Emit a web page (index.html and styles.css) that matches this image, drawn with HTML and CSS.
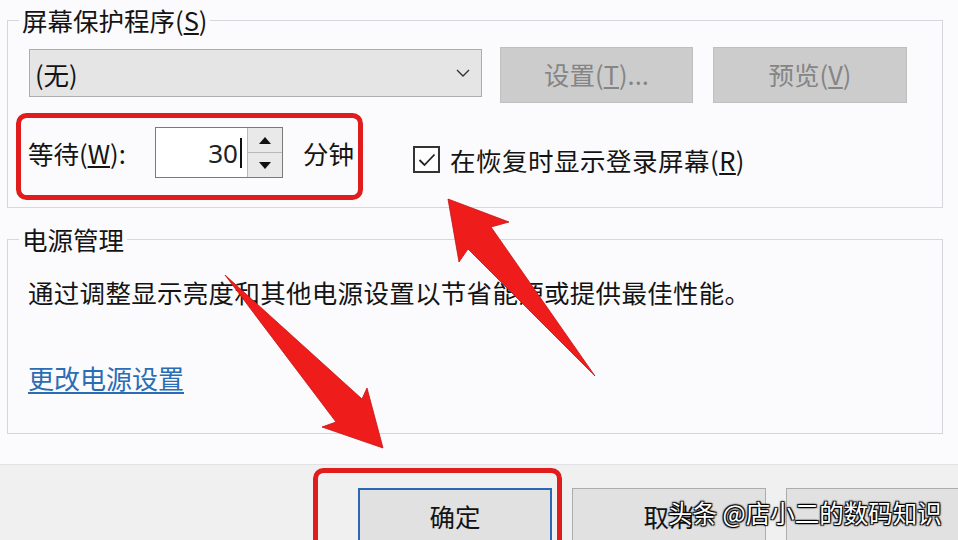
FILE: index.html
```html
<!DOCTYPE html>
<html lang="zh-CN">
<head>
<meta charset="utf-8">
<title>屏幕保护程序设置</title>
<link rel="stylesheet" href="styles.css">
</head>
<body>
<div class="page">
  <main class="dialog">
    <fieldset class="group group-saver">
      <legend>屏幕保护程序(<u>S</u>)</legend>
      <div class="group-body">
        <div class="row row-select">
          <div class="select">
            <span>(无)</span>
            <svg class="chevron" width="14" height="8" viewBox="0 0 14 8"><path d="M1 1 L7 7 L13 1" fill="none" stroke="#333" stroke-width="1.4"/></svg>
          </div>
          <button class="btn btn-disabled">设置(<u>T</u>)...</button>
          <button class="btn btn-disabled btn-wide">预览(<u>V</u>)</button>
        </div>
        <div class="row row-wait">
          <span class="wait-label">等待(<u>W</u>):</span>
          <div class="spin">
            <div class="spin-value">30<span class="caret"></span></div>
            <div class="spin-btns">
              <span class="spin-btn"><svg width="12" height="7" viewBox="0 0 12 7"><path d="M6 0 L12 7 L0 7 Z" fill="#111"/></svg></span>
              <span class="spin-btn"><svg width="12" height="7" viewBox="0 0 12 7"><path d="M0 0 L12 0 L6 7 Z" fill="#111"/></svg></span>
            </div>
          </div>
          <span class="unit">分钟</span>
          <label class="check">
            <span class="box"><svg width="18" height="14" viewBox="0 0 18 14"><path d="M1.5 7 L6.5 12 L16.5 1.5" fill="none" stroke="#222" stroke-width="1.8"/></svg></span>
            <span class="check-label">在恢复时显示登录屏幕(<u>R</u>)</span>
          </label>
        </div>
      </div>
    </fieldset>
    <fieldset class="group group-power">
      <legend>电源管理</legend>
      <div class="group-body power-body">
        <p class="desc">通过调整显示亮度和其他电源设置以节省能源或提供最佳性能。</p>
        <a class="link" href="#">更改电源设置</a>
      </div>
    </fieldset>
  </main>
  <footer class="footer">
    <button class="btn btn-std btn-primary">确定</button>
    <button class="btn btn-std">取消</button>
    <button class="btn btn-std" aria-label="应用"></button>
  </footer>
  <div class="watermark">头条 @店小二的数码知识</div>
  <svg class="annot" width="958" height="540" viewBox="0 0 958 540">
    <rect x="18.5" y="115.5" width="342" height="82" rx="8" fill="none" stroke="#e01c1c" stroke-width="5"/>
    <rect x="315.5" y="470.5" width="244" height="100" rx="8" fill="none" stroke="#e01c1c" stroke-width="5"/>
    <polygon class="arrow" points="448,199 509,222 491,227 595,376 468,249 459,262"/>
    <polygon class="arrow" points="225,275 362,399 367,388 383,448 322,427 336,422"/>
  </svg>
</div>
</body>
</html>
```

FILE: styles.css
```css
* { box-sizing: border-box; }
html, body { margin: 0; padding: 0; }
body {
  background: #fbfbfd;
  font-family: "Noto Sans CJK SC", "Noto Sans", sans-serif;
  color: #141414;
}
button { font: inherit; color: inherit; }

.page {
  position: relative;
  width: 958px;
  height: 540px;
  overflow: hidden;
  background: #fbfbfd;
}

.dialog {
  padding: 5px 0 0 7px;
}

.group {
  margin: 0;
  padding: 0;
  width: 936px;
  min-width: 0;
  border: 1px solid #d6d7db;
}
.group legend {
  font-size: 25.5px;
  line-height: 30px;
  padding: 0 3px;
  margin-left: 11px;
  color: #141414;
}
.group-body {
  padding: 12px 20px 29px 20px;
}

.row { display: flex; }

.row-select { align-items: flex-start; }
.select {
  width: 453px;
  height: 48px;
  margin-top: 2px;
  margin-left: 1px;
  background: #e5e5e5;
  border: 1px solid #adadad;
  display: flex;
  align-items: center;
  justify-content: space-between;
  padding: 0 11px 0 5px;
  font-size: 25.5px;
}
.btn-disabled {
  width: 193px;
  height: 56px;
  margin-left: 18px;
  background: #cccccc;
  border: 1px solid #bfbfbf;
  color: #858585;
  font-size: 25.5px;
  padding: 0 0 3px 0;
}
.btn-disabled.btn-wide { width: 194px; margin-left: 20px; }

.row-wait {
  margin-top: 24px;
  align-items: center;
  height: 51px;
  font-size: 25.5px;
}
.wait-label { width: 127px; }
.spin {
  width: 128px;
  height: 51px;
  display: flex;
  border: 1px solid #7a7a7a;
  background: #fff;
}
.spin-value {
  flex: 1;
  display: flex;
  align-items: center;
  justify-content: flex-end;
  padding-right: 5px;
  font-family: "Noto Sans", sans-serif;
  font-size: 26px;
  color: #222;
}
.caret {
  width: 2px;
  height: 30px;
  background: #111;
  margin-left: 2px;
}
.spin-btns {
  width: 35px;
  display: flex;
  flex-direction: column;
  border-left: 1px solid #b9b9b9;
}
.spin-btn {
  flex: 1;
  display: flex;
  align-items: center;
  justify-content: center;
  background: #e9e9e9;
}
.spin-btn + .spin-btn { border-top: 1px solid #b9b9b9; }

.unit { margin-left: 20px; }
.check {
  margin-left: 59px;
  margin-top: 14px;
  display: flex;
  align-items: center;
  gap: 10px;
}
.check-label { letter-spacing: 0.5px; }
.box {
  width: 27px;
  height: 27px;
  border: 2px solid #333;
  background: #fff;
  display: flex;
  align-items: center;
  justify-content: center;
}

.group-power { margin-top: 16px; }
.power-body { padding: 23px 20px 39px 20px; }
.desc {
  margin: 0;
  font-size: 25.5px;
  line-height: 30px;
  letter-spacing: 0.3px;
}
.link {
  display: inline-block;
  margin-top: 56px;
  font-size: 26px;
  line-height: 30px;
  color: #2a6db5;
  text-decoration: underline;
  text-underline-offset: 3px;
}

.footer {
  margin-top: 30px;
  height: 77px;
  background: #f0f0f0;
  border-top: 1px solid #e2e2e4;
  display: flex;
  gap: 20px;
  padding: 23px 0 0 358px;
}
.btn-std {
  flex: none;
  width: 194px;
  height: 58px;
  background: #e1e1e1;
  border: 1px solid #adadad;
  font-size: 25.5px;
  color: #141414;
  padding: 0 0 4px 0;
}
.btn-primary {
  border: 2px solid #2b67b2;
}

.watermark {
  position: absolute;
  left: 668px;
  top: 497px;
  font-size: 24.5px;
  line-height: 32px;
  color: #fff;
  white-space: nowrap;
  text-shadow: 1px 1px 1px #000, -1px -1px 1px #000, 1px -1px 1px #000, -1px 1px 1px #000, 0 0 3px rgba(0,0,0,0.6);
}

.annot {
  position: absolute;
  left: 0;
  top: 0;
  pointer-events: none;
}
.arrow {
  fill: #ee1d1b;
  stroke: #c31414;
  stroke-width: 0.8;
  stroke-linejoin: round;
}
```
